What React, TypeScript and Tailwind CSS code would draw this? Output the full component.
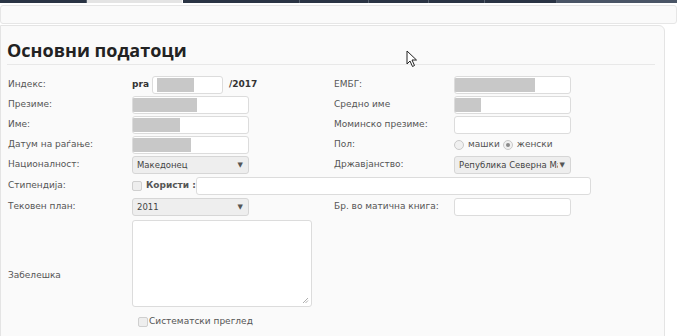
import React from "react";

const font = { fontFamily: '"DejaVu Sans", Verdana, sans-serif' };

function Redact({ w }: { w: number }) {
  return <span className="block h-[14px] bg-[#c8c8c8] shrink-0" style={{ width: w }} />;
}

function TextInput({ width = 117, redact = 0 }: { width?: number; redact?: number }) {
  return (
    <div
      className="h-[18px] shrink-0 rounded-[3px] border border-[#dcdcdc] bg-white flex items-center overflow-hidden"
      style={{ width }}
    >
      {redact > 0 && <Redact w={redact} />}
    </div>
  );
}

function Select({ value }: { value: string }) {
  return (
    <div className="h-[18px] w-[117px] shrink-0 rounded-[3px] border border-[#d6d6d6] bg-[#eeeeee] flex items-center pl-[4px] pr-[5px]">
      <span className="flex-1 text-[8.5px] text-[#444] whitespace-nowrap overflow-hidden">{value}</span>
      <span className="pl-[2px] text-[7px] text-[#555]">▼</span>
    </div>
  );
}

function Label({ children, w }: { children: React.ReactNode; w: number }) {
  return (
    <div className="text-[9px] text-[#555] shrink-0 whitespace-nowrap" style={{ width: w }}>
      {children}
    </div>
  );
}

function Radio({ checked }: { checked?: boolean }) {
  return (
    <span className="w-[10px] h-[10px] rounded-full border border-[#c9c9c9] bg-[#f0f0f0] flex items-center justify-center">
      {checked && <span className="w-[4px] h-[4px] rounded-full bg-[#8a8a8a]" />}
    </span>
  );
}

function Check() {
  return <span className="w-[10px] h-[10px] rounded-[2px] border border-[#cfcfcf] bg-[#eeeeee] shrink-0" />;
}

export default function App() {
  const tabs = [87, 96, 117, 69, 60, 56, 72];
  return (
    <div className="w-[677px] h-[336px] bg-white overflow-hidden relative" style={font}>
      {/* top nav strip */}
      <div className="h-[3px] flex bg-[#4a5566]">
        {tabs.map((w, i) => (
          <div
            key={i}
            className={
              i === 1
                ? "h-full bg-[#e4e4e4] border-r border-[#ffffff]"
                : "h-full bg-[#2a3444] border-r border-[#56606e]"
            }
            style={{ width: w }}
          />
        ))}
      </div>
      <div className="mt-[2px] h-[19px] border border-[#e6e6e6] rounded-[3px] bg-[#fafafa]" />

      {/* panel */}
      <div className="w-[665px] h-[320px] mt-[1px] border border-[#e4e4e4] rounded-tr-[6px] bg-[#fafafa] pl-[6px] pr-[8px]">
        <div className="pt-[13px] pb-[3px] border-b border-[#e8e8e8] mr-[1px]">
          <h1
            className="text-[18px] font-bold text-[#222] leading-[22px]"
            style={{ fontFamily: '"Open Sans", "DejaVu Sans", sans-serif' }}
          >
            Основни податоци
          </h1>
        </div>

        <div className="mt-[10px] pl-[1px] flex">
          {/* left column */}
          <div className="w-[326px] shrink-0 flex flex-col">
            <div className="h-[20px] flex items-center">
              <Label w={124}>Индекс:</Label>
              <span className="text-[9px] font-bold text-[#333] w-[20px] shrink-0">pra</span>
              <div className="h-[18px] w-[71px] shrink-0 rounded-[3px] border border-[#dcdcdc] bg-white flex items-center pl-[4px]">
                <Redact w={37} />
              </div>
              <span className="text-[9px] font-bold text-[#333] ml-[6px]">/2017</span>
            </div>
            <div className="h-[20px] flex items-center">
              <Label w={124}>Презиме:</Label>
              <TextInput redact={64} />
            </div>
            <div className="h-[20px] flex items-center">
              <Label w={124}>Име:</Label>
              <TextInput redact={47} />
            </div>
            <div className="h-[20px] flex items-center">
              <Label w={124}>Датум на раѓање:</Label>
              <TextInput redact={58} />
            </div>
            <div className="h-[20px] flex items-center">
              <Label w={124}>Националност:</Label>
              <Select value="Македонец" />
            </div>
            <div className="h-[20px] mt-[1px] flex items-center">
              <Label w={124}>Стипендија:</Label>
              <Check />
              <span className="text-[9px] font-bold text-[#555] ml-[4px] w-[50px] shrink-0 whitespace-nowrap">
                Користи :
              </span>
              <TextInput width={395} />
            </div>
            <div className="h-[20px] mt-[1px] flex items-center">
              <Label w={124}>Тековен план:</Label>
              <Select value="2011" />
            </div>
            <div className="mt-[3px] flex">
              <div className="w-[124px] shrink-0 pt-[49px] text-[9px] text-[#555]">Забелешка</div>
              <div className="relative w-[180px] h-[87px] rounded-[3px] border border-[#dcdcdc] bg-white">
                <svg className="absolute right-[2px] bottom-[2px]" width="7" height="7" viewBox="0 0 7 7">
                  <path d="M1 6 L6 1 M3.5 6 L6 3.5" stroke="#999" strokeWidth="0.8" />
                </svg>
              </div>
            </div>
            <div className="mt-[8px] ml-[130px] flex items-center gap-[1px]">
              <Check />
              <span className="text-[9px] text-[#555]">Систематски преглед</span>
            </div>
          </div>

          {/* right column */}
          <div className="flex flex-col">
            <div className="h-[20px] flex items-center">
              <Label w={120}>ЕМБГ:</Label>
              <TextInput redact={80} />
            </div>
            <div className="h-[20px] flex items-center">
              <Label w={120}>Средно име</Label>
              <TextInput redact={26} />
            </div>
            <div className="h-[20px] flex items-center">
              <Label w={120}>Моминско презиме:</Label>
              <TextInput />
            </div>
            <div className="h-[20px] flex items-center">
              <Label w={120}>Пол:</Label>
              <Radio />
              <span className="text-[9px] text-[#555] ml-[4px] mr-[3px]">машки</span>
              <Radio checked />
              <span className="text-[9px] text-[#555] ml-[4px]">женски</span>
            </div>
            <div className="h-[20px] flex items-center">
              <Label w={120}>Државјанство:</Label>
              <Select value="Република Северна Македонија" />
            </div>
            <div className="h-[20px] mt-[1px]" />
            <div className="h-[20px] mt-[1px] flex items-center">
              <Label w={120}>Бр. во матична книга:</Label>
              <TextInput />
            </div>
          </div>
        </div>
      </div>

      {/* mouse cursor */}
      <svg className="absolute left-[406px] top-[50px]" width="12" height="18" viewBox="0 0 12 18">
        <path d="M1 1 L1 14 L4 11 L6.5 16.5 L8.5 15.5 L6 10 L10.5 10 Z" fill="#fff" stroke="#222" strokeWidth="1" strokeLinejoin="round" />
      </svg>
    </div>
  );
}
